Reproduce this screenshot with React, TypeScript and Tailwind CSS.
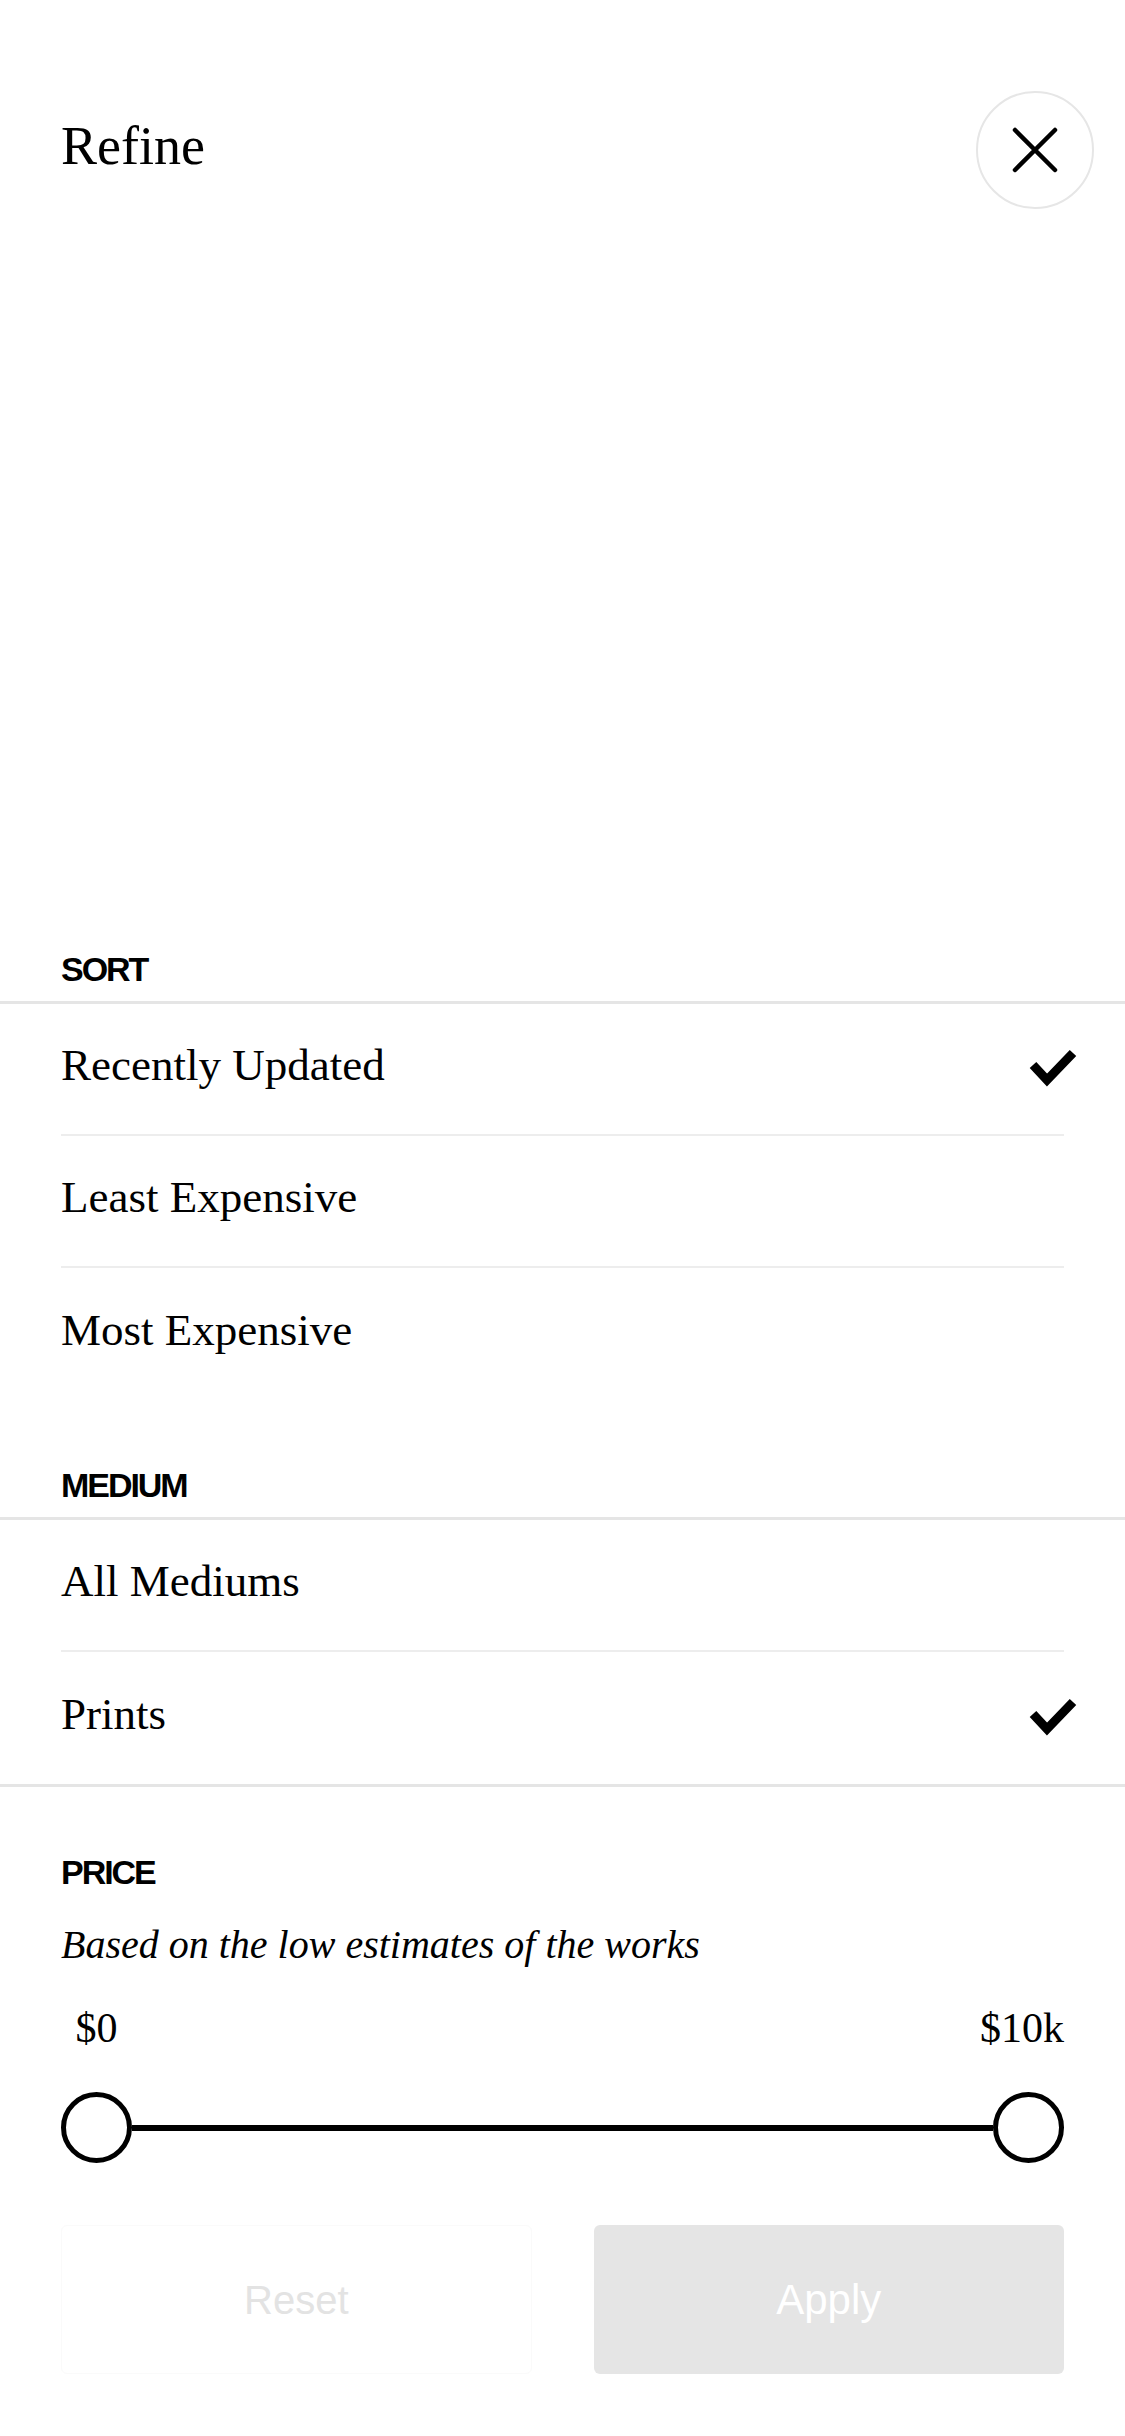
import React from 'react'

const serif = "font-['Liberation_Serif','Times_New_Roman',serif]"
const sans = "font-['Liberation_Sans',Arial,sans-serif]"

function Check() {
  return (
    <svg width="50" height="42" viewBox="0 0 50 42" className="-mr-[14px] shrink-0">
      <polyline points="5,17 19,32 45,5" fill="none" stroke="#000" strokeWidth="9" strokeLinejoin="miter" />
    </svg>
  )
}

function SectionLabel({ children }: { children: React.ReactNode }) {
  return (
    <div className={`${sans} px-[61px] text-[34px] leading-none font-bold tracking-[-0.06em] text-black`}>
      {children}
    </div>
  )
}

function Row({ label, checked, last }: { label: string; checked?: boolean; last?: boolean }) {
  return (
    <div
      className={`h-[132px] flex items-center justify-between ${last ? '' : 'border-b-2 border-[#ededed]'}`}
    >
      <span className={`${serif} text-[45px] leading-none text-black mb-[8px]`}>{label}</span>
      {checked && <Check />}
    </div>
  )
}

export default function App() {
  return (
    <div className="w-[1125px] min-h-[2436px] bg-white">
      {/* Header */}
      <div className="flex justify-between items-start pl-[61px] pr-[31px] pt-[91px]">
        <h1 className={`${serif} mt-[28px] text-[54px] leading-none text-black`}>Refine</h1>
        <button className="w-[118px] h-[118px] rounded-full border-2 border-[#e6e6e6] flex items-center justify-center">
          <svg width="46" height="46" viewBox="0 0 46 46">
            <path d="M3 3 L43 43 M43 3 L3 43" stroke="#000" strokeWidth="4.5" strokeLinecap="round" />
          </svg>
        </button>
      </div>

      {/* Sort */}
      <div className="mt-[743px]">
        <SectionLabel>SORT</SectionLabel>
        <div className="mt-[15px] h-[3px] bg-[#e5e5e5]" />
        <div className="px-[61px]">
          <Row label="Recently Updated" checked />
          <Row label="Least Expensive" />
          <Row label="Most Expensive" last />
        </div>
      </div>

      {/* Medium */}
      <div className="mt-[68px]">
        <SectionLabel>MEDIUM</SectionLabel>
        <div className="mt-[15px] h-[3px] bg-[#e5e5e5]" />
        <div className="px-[61px]">
          <Row label="All Mediums" />
          <Row label="Prints" checked last />
        </div>
        <div className="h-[3px] bg-[#e5e5e5]" />
      </div>

      {/* Price */}
      <div className="mt-[68px]">
        <SectionLabel>PRICE</SectionLabel>
        <p className={`${serif} italic px-[61px] mt-[36px] text-[40px] leading-none text-black`}>
          Based on the low estimates of the works
        </p>
        <div className={`${serif} mt-[42px] px-[61px] flex justify-between text-[42px] leading-none text-black`}>
          <span className="w-[71px] text-center">$0</span>
          <span>$10k</span>
        </div>
        <div className="mt-[43px] px-[61px] flex items-center">
          <div className="w-[71px] h-[71px] rounded-full border-[5px] border-black bg-white shrink-0" />
          <div className="flex-1 h-[6px] bg-black" />
          <div className="w-[71px] h-[71px] rounded-full border-[5px] border-black bg-white shrink-0" />
        </div>
      </div>

      {/* Actions */}
      <div className={`${sans} mt-[62px] px-[61px] grid grid-cols-2 gap-[62px]`}>
        <button className="h-[149px] rounded-[6px] border border-[#fafafa] text-[40px] text-[#e3e3e3]">
          Reset
        </button>
        <button className="h-[149px] rounded-[6px] bg-[#e5e5e5] text-[42px] text-white">
          Apply
        </button>
      </div>
    </div>
  )
}
